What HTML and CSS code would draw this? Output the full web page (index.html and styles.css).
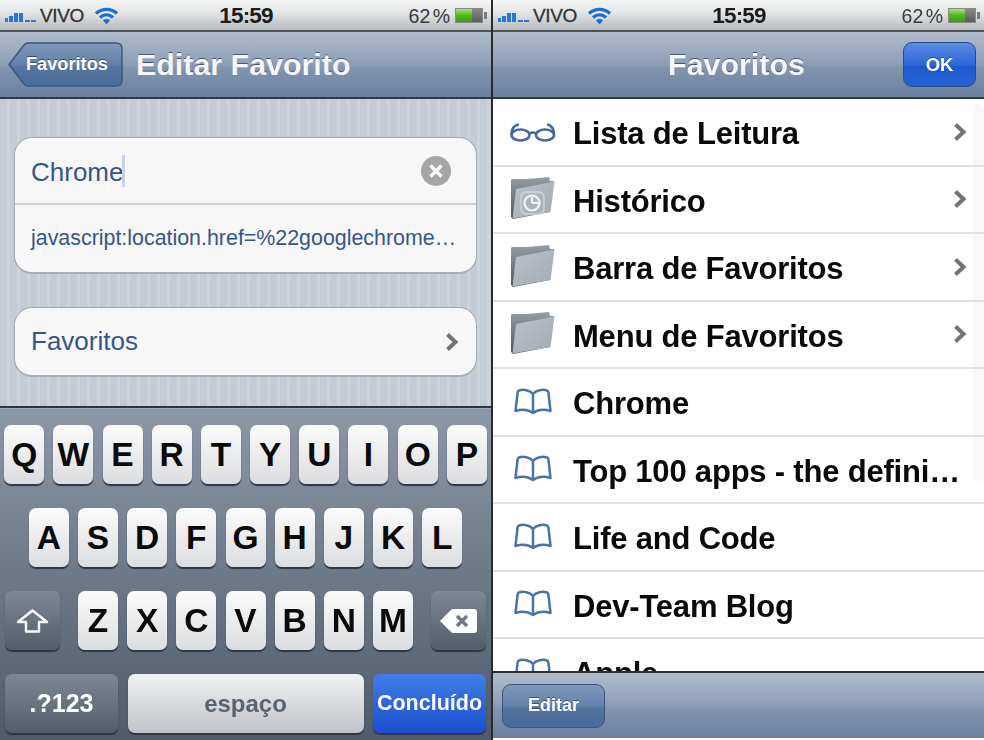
FILE: index.html
```html
<!DOCTYPE html>
<html lang="pt-BR">
<head>
<meta charset="utf-8">
<title>Favoritos</title>
<link rel="stylesheet" href="styles.css">
</head>
<body>
<svg class="defs" width="0" height="0" aria-hidden="true">
  <defs>
    <linearGradient id="gBack" x1="0" y1="0" x2="0" y2="1">
      <stop offset="0" stop-color="#7f98ba"/><stop offset=".5" stop-color="#6381a9"/><stop offset=".55" stop-color="#55769f"/><stop offset="1" stop-color="#4a6c99"/>
    </linearGradient>
    <linearGradient id="gFront" x1="0" y1="0" x2="1" y2="1">
      <stop offset="0" stop-color="#bcc2c9"/><stop offset="1" stop-color="#a3aab3"/>
    </linearGradient>
    <linearGradient id="gTab" x1="0" y1="0" x2="0" y2="1">
      <stop offset="0" stop-color="#979da5"/><stop offset="1" stop-color="#4e545c"/>
    </linearGradient>
    <symbol id="folder" viewBox="0 0 44 44">
      <path d="M0 3 Q0 2 1 2 L16 2 L38 0 L39 4 L43 4 L39 35 L2 42 L0 40 Z" fill="url(#gTab)"/>
      <path d="M5 12 L43.500 4.500 L39.500 35 L1.500 41.500 Z" fill="url(#gFront)"/>
    </symbol>
    <symbol id="book" viewBox="0 0 40 28">
      <path d="M20 6 C17 2 10 1 6 2.500 Q4.800 3 4.600 4.500 L2.500 23 C9 21 15 21.500 20 25 C25 21.500 31 21 37.500 23 L35.400 4.500 Q35.200 3 34 2.500 C30 1 23 2 20 6 Z M20 6 L20 24" fill="none" stroke="#4a73aa" stroke-width="2.500" stroke-linejoin="round"/>
    </symbol>
    <symbol id="chev" viewBox="0 0 14 20">
      <path d="M2.500 2.500 L10.500 10 L2.500 17.500" fill="none" stroke="#737373" stroke-width="4"/>
    </symbol>
    <symbol id="signal" viewBox="0 0 31 12">
      <path d="M0 6h3v4H0zM4 4h4v6H4zM9 1h4v9H9zM14 1h4v9h-4zM20 8h5v2h-5zM26 8h5v2h-5z" fill="#2a78d4"/>
    </symbol>
    <symbol id="wifi" viewBox="0 0 25 18">
      <path d="M2 6.500 C8 1 17 1 23 6.500 M6 10.500 C10 7 15 7 19 10.500" fill="none" stroke="#1a6fd0" stroke-width="3.200"/>
      <path d="M9 13.500 C11 11.500 14 11.500 16 13.500 L12.500 17.500 Z" fill="#1a6fd0"/>
    </symbol>
  </defs>
</svg>

<div class="pane">
  <header class="status">
    <div class="status-left">
      <svg class="signal" width="31" height="12"><use href="#signal"/></svg>
      <span class="carrier">VIVO</span>
      <svg class="wifi" width="25" height="18"><use href="#wifi"/></svg>
    </div>
    <span class="time">15:59</span>
    <div class="status-right">
      <span class="pct">62 %</span>
      <span class="battery"><span class="battery-fill"></span></span>
    </div>
  </header>
  <nav class="navbar nav-edit">
    <a class="back">
      <svg class="back-shape" width="115" height="45" viewBox="0 0 115 45"><path d="M1 22.500 L16 3 Q17.500 1 20 1 L108 1 Q114 1 114 7 L114 38 Q114 44 108 44 L20 44 Q17.500 44 16 42 Z" fill="url(#gBack)" stroke="#3e5778" stroke-width="1.500"/></svg>
      <span class="back-label">Favoritos</span>
    </a>
    <h1 class="title title-edit">Editar Favorito</h1>
  </nav>
  <main class="form">
    <section class="card card-first">
      <div class="field field-name">
        <span class="name-text">Chrome</span><span class="caret"></span>
        <svg class="clear" width="30" height="30" viewBox="0 0 30 30"><circle cx="15" cy="15" r="15" fill="#a6a6a6"/><path d="M9.500 9.500 L20.500 20.500 M20.500 9.500 L9.500 20.500" stroke="#fff" stroke-width="3.400"/></svg>
      </div>
      <div class="field field-url">javascript:location.href=%22googlechrome…</div>
    </section>
    <section class="card">
      <div class="field field-folder">
        <span class="name-text">Favoritos</span>
        <svg class="chev" width="14" height="20"><use href="#chev"/></svg>
      </div>
    </section>
  </main>
  <section class="keyboard">
    <div class="row">
      <span class="key">Q</span><span class="key">W</span><span class="key">E</span><span class="key">R</span><span class="key">T</span><span class="key">Y</span><span class="key">U</span><span class="key">I</span><span class="key">O</span><span class="key">P</span>
    </div>
    <div class="row">
      <span class="key">A</span><span class="key">S</span><span class="key">D</span><span class="key">F</span><span class="key">G</span><span class="key">H</span><span class="key">J</span><span class="key">K</span><span class="key">L</span>
    </div>
    <div class="row row-split">
      <span class="key key-dark key-side">
        <svg width="33" height="24" viewBox="0 0 33 24"><path d="M16.500 1.500 L31 13 L23 13 L23 22.500 L10 22.500 L10 13 L2 13 Z" fill="none" stroke="#fff" stroke-width="2.400" stroke-linejoin="round"/></svg>
      </span>
      <div class="letters">
        <span class="key">Z</span><span class="key">X</span><span class="key">C</span><span class="key">V</span><span class="key">B</span><span class="key">N</span><span class="key">M</span>
      </div>
      <span class="key key-dark key-side">
        <svg width="37" height="24" viewBox="0 0 37 24"><path d="M0 12 L11 1 Q12 0 13 0 L34 0 Q37 0 37 3 L37 21 Q37 24 34 24 L13 24 Q12 24 11 23 Z" fill="#fff"/><path d="M17 7 L27 17 M27 7 L17 17" stroke="#6f7883" stroke-width="3.400"/></svg>
      </span>
    </div>
    <div class="row row-bottom">
      <span class="key key-dark key-num">.?123</span>
      <span class="key key-space">espaço</span>
      <span class="key key-go">Concluído</span>
    </div>
  </section>
</div>

<div class="divider"></div>

<div class="pane">
  <header class="status">
    <div class="status-left">
      <svg class="signal" width="31" height="12"><use href="#signal"/></svg>
      <span class="carrier">VIVO</span>
      <svg class="wifi" width="25" height="18"><use href="#wifi"/></svg>
    </div>
    <span class="time">15:59</span>
    <div class="status-right">
      <span class="pct">62 %</span>
      <span class="battery"><span class="battery-fill"></span></span>
    </div>
  </header>
  <nav class="navbar nav-list">
    <span></span>
    <h1 class="title">Favoritos</h1>
    <a class="ok">OK</a>
  </nav>
  <main class="list">
    <div class="scrollbar"></div>
    <div class="item">
      <span class="item-icon">
        <svg width="46" height="20" viewBox="0 0 46 20"><g fill="none" stroke="#44689f" stroke-width="2.600"><ellipse cx="10.500" cy="13" rx="9" ry="5.500"/><ellipse cx="35" cy="13" rx="9" ry="5.500"/><path d="M19.500 11.500 Q22.750 9.500 26 11.500 M1.500 12 Q2 3.500 9 2.500 M44 12 Q43.500 3.500 37 2.500"/></g></svg>
      </span>
      <span class="item-text">Lista de Leitura</span>
      <svg class="chev" width="14" height="20"><use href="#chev"/></svg>
    </div>
    <div class="item">
      <span class="item-icon">
        <svg width="44" height="44"><use href="#folder"/><g fill="none" stroke="#f2f4f6" stroke-width="2.200"><rect x="10" y="15" width="23" height="22" rx="5" stroke="#d2d6db" stroke-width="1.400"/><circle cx="21" cy="26" r="7.500"/><path d="M21 26 V20 M21 26 H27.500"/></g></svg>
      </span>
      <span class="item-text">Histórico</span>
      <svg class="chev" width="14" height="20"><use href="#chev"/></svg>
    </div>
    <div class="item">
      <span class="item-icon"><svg width="44" height="44"><use href="#folder"/></svg></span>
      <span class="item-text">Barra de Favoritos</span>
      <svg class="chev" width="14" height="20"><use href="#chev"/></svg>
    </div>
    <div class="item">
      <span class="item-icon"><svg width="44" height="44"><use href="#folder"/></svg></span>
      <span class="item-text">Menu de Favoritos</span>
      <svg class="chev" width="14" height="20"><use href="#chev"/></svg>
    </div>
    <div class="item">
      <span class="item-icon"><svg width="40" height="28"><use href="#book"/></svg></span>
      <span class="item-text">Chrome</span>
    </div>
    <div class="item">
      <span class="item-icon"><svg width="40" height="28"><use href="#book"/></svg></span>
      <span class="item-text">Top 100 apps - the defini…</span>
    </div>
    <div class="item">
      <span class="item-icon"><svg width="40" height="28"><use href="#book"/></svg></span>
      <span class="item-text">Life and Code</span>
    </div>
    <div class="item">
      <span class="item-icon"><svg width="40" height="28"><use href="#book"/></svg></span>
      <span class="item-text">Dev-Team Blog</span>
    </div>
    <div class="item">
      <span class="item-icon"><svg width="40" height="28"><use href="#book"/></svg></span>
      <span class="item-text">Apple</span>
    </div>
  </main>
  <footer class="toolbar">
    <a class="edit">Editar</a>
  </footer>
</div>
</body>
</html>
```
FILE: styles.css
```css
* { box-sizing: border-box; }
html, body { margin: 0; padding: 0; }
body {
  width: 984px;
  height: 740px;
  overflow: hidden;
  display: flex;
  background: #fff;
  font-family: "Liberation Sans", Arial, sans-serif;
}
.defs { position: absolute; }
.pane {
  width: 491px;
  height: 740px;
  display: flex;
  flex-direction: column;
  overflow: hidden;
  filter: blur(0.55px);
}
.divider { width: 2px; background: #2b2b2b; }

/* status bar */
.status {
  height: 32px;
  flex: none;
  display: grid;
  grid-template-columns: 1fr auto 1fr;
  align-items: center;
  padding: 0 4px 0 5px;
  background: linear-gradient(#f4f5f5, #e4e6e7 40%, #b9bcbf);
  border-bottom: 2px solid #4d5156;
  color: #333;
}
.status-left, .status-right { display: flex; align-items: center; }
.status-right { justify-content: flex-end; }
.signal { margin: 5px 4px 0 0; }
.carrier { font-size: 19px; width: 54px; padding-top: 2px; letter-spacing: -.4px; color: #333; -webkit-text-stroke: .3px #333; }
.wifi { margin-top: 2px; }
.time { font-size: 22.500px; font-weight: 700; padding-top: 2px; letter-spacing: -.8px; color: #1c1c1c; }
.pct { font-size: 19.500px; margin-right: 5px; padding-top: 2px; color: #3a3a3a; word-spacing: -3px; }
.battery {
  width: 28px;
  height: 15px;
  margin-right: 4px;
  background: #666 linear-gradient(#8a8a8a, #5c5c5c);
  border: 1px solid #e8e8e8;
  outline: 1px solid #8a8a8a;
  outline-offset: -1px;
  position: relative;
  display: block;
}
.battery::after {
  content: "";
  position: absolute;
  right: -5px;
  top: 3px;
  width: 3px;
  height: 7px;
  background: #7a7a7a;
}
.battery-fill {
  display: block;
  width: 62%;
  height: 100%;
  background: linear-gradient(#a8e26a, #52b81c 50%, #389a10);
}

/* nav */
.navbar {
  height: 67px;
  flex: none;
  background: linear-gradient(#b0bccd, #8c9eb7 50%, #8195af 55%, #6a809f);
  border-bottom: 2px solid #2f3a48;
  display: flex;
  align-items: center;
}
.nav-edit { padding-left: 8px; gap: 13px; }
.nav-list {
  display: grid;
  grid-template-columns: 1fr auto 1fr;
  padding-right: 4px;
}
.title {
  margin: 0;
  font-size: 30.400px;
  font-weight: 700;
  color: #f4f6f8;
  text-shadow: 0 -1px 0 rgba(40, 55, 80, .7);
}
.back {
  width: 115px;
  height: 45px;
  position: relative;
  display: flex;
  align-items: center;
  padding-left: 18px;
}
.back-shape { position: absolute; left: 0; top: 0; }
.back-label {
  position: relative;
  font-size: 18.200px;
  font-weight: 700;
  color: #fff;
  text-shadow: 0 -1px 0 rgba(30, 45, 70, .7);
}
.ok, .edit {
  display: flex;
  align-items: center;
  justify-content: center;
  font-weight: 700;
  color: #fff;
  border-radius: 9px;
  text-shadow: 0 -1px 0 rgba(30, 45, 70, .6);
}
.ok {
  justify-self: end;
  width: 73px;
  height: 45px;
  margin-right: 4px;
  font-size: 18.500px;
  background: linear-gradient(#5a8ae2, #2f68d8 50%, #2059cf 55%, #2463d4);
  border: 1px solid #2c4a86;
}
.edit {
  width: 103px;
  height: 44px;
  font-size: 18px;
  background: linear-gradient(#7f98bb, #6482aa 50%, #54749f 55%, #476a99);
  border: 1px solid #3c5578;
}

/* edit form */
.form {
  flex: 1;
  padding: 38px 14px 0;
  background: repeating-linear-gradient(90deg, #c4cbd5 0 7px, #ccd3da 7px 10px);
}
.card {
  width: 463px;
  background: #f7f7f7;
  border: 1px solid #a3a9b0;
  border-bottom: 2px solid #a9afb6;
  border-radius: 18px;
}
.card-first { margin-bottom: 33px; }
.field {
  display: flex;
  align-items: center;
  padding-left: 16px;
  color: #36558a;
}
.field-name { height: 67px; border-bottom: 2px solid #cfcfcf; padding-right: 25px; }
.field-name .name-text { margin-top: 3px; }
.field-url { height: 67px; font-size: 21.400px; }
.field-folder { height: 67px; padding-right: 17px; justify-content: space-between; }
.name-text { font-size: 26px; }
.caret { width: 3px; height: 32px; background: #c6d2ec; margin-left: -1px; margin-right: auto; }

/* keyboard */
.keyboard {
  flex: none;
  height: 334px;
  padding: 17px 5px 0;
  background: linear-gradient(#8d98a6, #4f5b6a);
  border-top: 2px solid #2d3540;
  box-shadow: inset 0 1px 0 #a3acb7;
  display: flex;
  flex-direction: column;
  gap: 24px;
}
.row { display: flex; justify-content: center; gap: 9.200px; }
.row-split { justify-content: space-between; gap: 0; }
.row-bottom { justify-content: space-between; gap: 9px; }
.letters { display: flex; gap: 9.200px; }
.key {
  width: 40px;
  height: 59px;
  flex: none;
  display: flex;
  align-items: center;
  justify-content: center;
  border-radius: 7px;
  background: linear-gradient(#fbfbfb, #dcdde0);
  box-shadow: 0 2px 1px #30363f;
  font-size: 33.500px;
  font-weight: 700;
  color: #0a0a0a;
}
.key-dark {
  background: linear-gradient(#7d8795, #535d6b);
  color: #fff;
}
.key-side { width: 55px; }
.key-num { width: 113px; font-size: 25px; }
.key-space {
  width: 236px;
  font-size: 24px;
  color: #5a6370;
  background: linear-gradient(#f2f2f3, #bfc2c7);
}
.key-go {
  width: 113px;
  font-size: 21.500px;
  color: #fff;
  background: linear-gradient(#3f7ee6, #1b4fd0);
}

/* list */
.list {
  flex: 1;
  min-height: 0;
  overflow: hidden;
  position: relative;
  background: #fff;
}
.scrollbar {
  position: absolute;
  right: 0;
  top: 5px;
  width: 11px;
  height: 378px;
  border-radius: 5px;
  background: #f8f8f9;
}
.item {
  height: 67.500px;
  display: flex;
  align-items: center;
  border-bottom: 2px solid #e1e1e1;
  padding-right: 17px;
  position: relative;
}
.item-icon { width: 80px; flex: none; display: flex; justify-content: center; }
.item-text {
  flex: 1;
  padding-top: 5px;
  white-space: nowrap;
  font-size: 31px;
  font-weight: 700;
  color: #0a0a0a;
  letter-spacing: -.2px;
}
.toolbar {
  height: 67px;
  flex: none;
  margin-bottom: 2px;
  display: flex;
  align-items: center;
  padding: 0 0 0 9px;
  border-top: 2px solid #2c2f33;
  background: linear-gradient(#b0bccd, #8c9eb7 50%, #8195af 55%, #6a809f);
}
```
